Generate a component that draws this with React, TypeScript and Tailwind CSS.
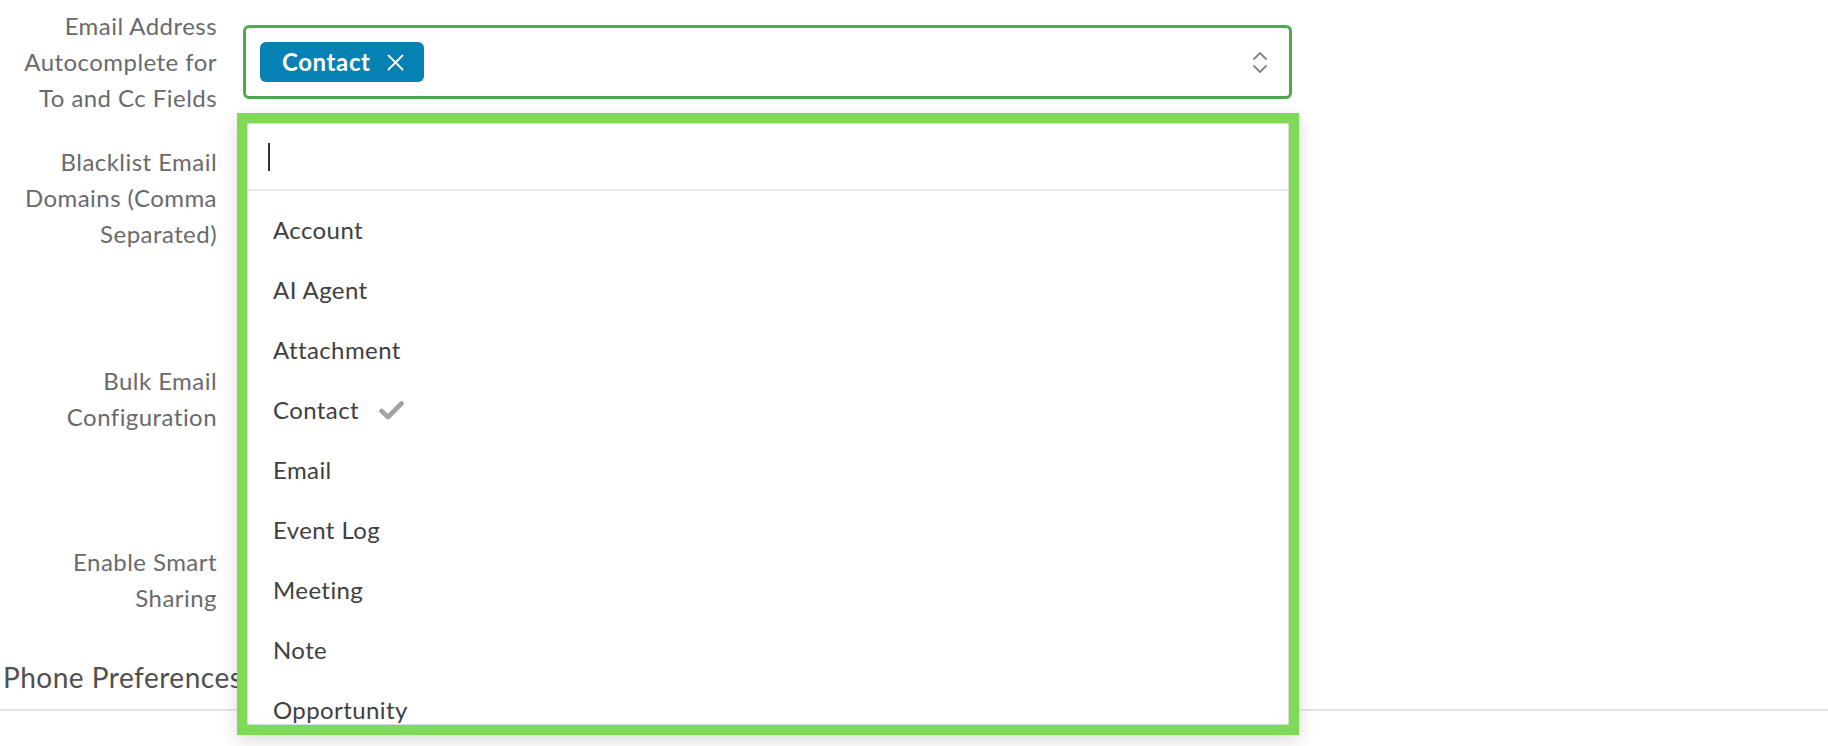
import React from 'react';

const options = [
  'Account',
  'AI Agent',
  'Attachment',
  'Contact',
  'Email',
  'Event Log',
  'Meeting',
  'Note',
  'Opportunity',
];

const Label: React.FC<{ lines: string[] }> = ({ lines }) => (
  <div className="w-[217px] shrink-0 text-right text-[24px] leading-[36px] tracking-[0.45px] text-[#6a6a6a]">
    {lines.map((l) => (
      <div key={l} className="whitespace-nowrap">{l}</div>
    ))}
  </div>
);

const App: React.FC = () => {
  return (
    <div className="relative w-[1828px] h-[746px] overflow-hidden bg-white font-['Lato','Open_Sans',sans-serif]">
      <div className="flex flex-col pt-[8px]">
        {/* Email autocomplete row */}
        <div className="flex items-center gap-[26px]">
          <Label lines={['Email Address', 'Autocomplete for', 'To and Cc Fields']} />
          <div className="flex h-[74px] w-[1049px] items-center rounded-[6px] border-[3px] border-[#4ea850] pl-[14px] pr-[22px]">
            <span className="flex h-[40px] items-center gap-[16px] rounded-[6px] bg-[#0581b4] pl-[22px] pr-[20px] text-[24px] font-bold tracking-[0.6px] text-white">
              Contact
              <svg width="17" height="17" viewBox="0 0 17 17" fill="none" stroke="white" strokeWidth="1.8" strokeLinecap="round">
                <path d="M1.5 1.5 L15.5 15.5 M15.5 1.5 L1.5 15.5" />
              </svg>
            </span>
            <svg className="ml-auto" width="14" height="21" viewBox="0 0 14 21" fill="none" stroke="#7c8594" strokeWidth="1.8" strokeLinecap="round" strokeLinejoin="round">
              <path d="M1 7 L7 1 L13 7" />
              <path d="M1 14 L7 20 L13 14" />
            </svg>
          </div>
        </div>

        {/* Blacklist row */}
        <div className="mt-[28px] flex gap-[26px]">
          <Label lines={['Blacklist Email', 'Domains (Comma', 'Separated)']} />
        </div>

        {/* Bulk email row */}
        <div className="mt-[111px] flex gap-[26px]">
          <Label lines={['Bulk Email', 'Configuration']} />
        </div>

        {/* Smart sharing row */}
        <div className="mt-[109px] flex gap-[26px]">
          <Label lines={['Enable Smart', 'Sharing']} />
        </div>

        <h2 className="mt-[43px] whitespace-nowrap pl-[3px] text-[28px] leading-[36px] tracking-[0.5px] text-[#505050]">Phone Preferences</h2>
        <div className="mt-[14px] h-[2px] w-full bg-[#e4e4ea]" />
      </div>

      {/* Open dropdown, highlighted */}
      <div className="absolute left-[237px] top-[113px] z-10 h-[622px] w-[1062px] border-[10px] border-[#7ed957] bg-white shadow-[0_6px_18px_rgba(0,0,0,0.14)]">
        <div className="h-full overflow-hidden border border-[#dcdcdc]">
          <div className="flex h-[65px] items-center pl-[20px]">
            <div className="h-[28px] w-[2px] bg-[#333]" />
          </div>
          <div className="h-[2px] bg-[#e8e8ee]" />
          <ul className="pt-[9px]">
            {options.map((o) => (
              <li key={o} className="flex h-[60px] items-center pl-[25px] text-[24px] tracking-[0.4px] text-[#404040]">
                {o}
                {o === 'Contact' && (
                  <svg className="ml-[20px]" width="25" height="19" viewBox="0 0 25 19" fill="none" stroke="#a3a3a3" strokeWidth="4.6" strokeLinecap="round" strokeLinejoin="round">
                    <path d="M2.5 10 L9 16 L22.5 2.5" />
                  </svg>
                )}
              </li>
            ))}
          </ul>
        </div>
      </div>
    </div>
  );
};

export default App;
